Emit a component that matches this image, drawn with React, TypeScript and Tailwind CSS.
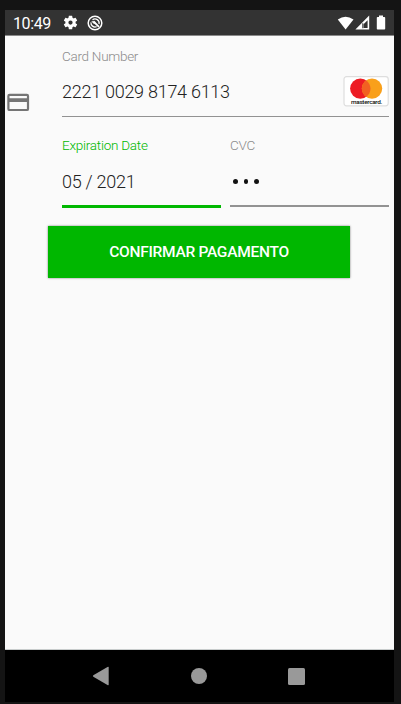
import type { ReactNode } from "react";

function StatusBar() {
  return (
    <header className="flex h-[25px] shrink-0 items-center bg-[#333333] pr-[8px] pl-[8px] text-white">
      <span className="w-[49px] pt-px text-[16px] leading-[25px] tracking-[-0.4px]">10:49</span>
      <svg className="h-[17px] w-[17px]" viewBox="0 0 24 24" fill="currentColor">
        <path d="M19.14 12.94c.04-.3.06-.61.06-.94 0-.32-.02-.64-.07-.94l2.03-1.58a.49.49 0 0 0 .12-.61l-1.92-3.32a.488.488 0 0 0-.59-.22l-2.39.96c-.5-.38-1.03-.7-1.62-.94l-.36-2.54a.484.484 0 0 0-.48-.41h-3.84c-.24 0-.43.17-.47.41l-.36 2.54c-.59.24-1.13.57-1.62.94l-2.39-.96c-.22-.08-.47 0-.59.22L2.74 8.87c-.12.21-.08.47.12.61l2.03 1.58c-.05.3-.09.63-.09.94s.02.64.07.94l-2.03 1.58a.49.49 0 0 0-.12.61l1.92 3.32c.12.22.37.29.59.22l2.39-.96c.5.38 1.03.7 1.62.94l.36 2.54c.05.24.24.41.48.41h3.84c.24 0 .44-.17.47-.41l.36-2.54c.59-.24 1.13-.56 1.62-.94l2.39.96c.22.08.47 0 .59-.22l1.92-3.32c.12-.22.07-.47-.12-.61l-2.01-1.58zM12 15a3 3 0 1 1 0-6 3 3 0 0 1 0 6z" />
      </svg>
      <svg className="ml-[8px] h-4 w-4" viewBox="0 0 16 16" fill="none" stroke="currentColor">
        <circle cx="8" cy="8" r="6.8" strokeWidth="1.5" />
        <path d="M9.6 11.7A4.100 4.100 0 0 1 4 7.300M5.500 4.800A4.100 4.100 0 0 1 12 9" strokeWidth="1.300" />
        <path d="M7 7 12 11.900" strokeWidth="1.800" />
        <path d="M4.600 6.500 7.500 6 8.800 8.400H6.600Z" fill="currentColor" strokeWidth=".3" />
      </svg>
      <svg className="ml-auto h-[14px] w-[17px]" viewBox="0 0 17 14" fill="currentColor">
        <path d="M.8 3.500Q8.500-2 16.500 3.500L8.600 13.500Z" />
      </svg>
      <svg className="ml-[1px] h-[15px] w-[15px]" viewBox="0 0 15 15" fill="currentColor">
        <path fillRule="evenodd" d="M14.200.5V14.500H.4ZM12.600 5.200 8.500 9.300V12.900H12.600Z" />
        <path fill="#333333" d="M7.300 8.300h1v4.900h-1z" />
      </svg>
      <svg className="ml-[6px] h-[15px] w-[10px]" viewBox="0 0 10 15" fill="currentColor">
        <path d="M3 .5h4V2h1.400q.8 0 .8.8v10.900q0 .8-.8.8H1.600q-.8 0-.8-.8V2.800Q.8 2 1.600 2H3Z" />
      </svg>
    </header>
  );
}

function MastercardBadge() {
  return (
    <svg className="h-[31px] w-[46px]" viewBox="0 0 46 31">
      <rect x="1" y=".6" width="44.200" height="29.200" rx="2.500" fill="#fff" stroke="#dedede" strokeWidth="1.200" />
      <circle cx="17.300" cy="12.600" r="10.200" fill="#ed1c24" />
      <circle cx="29" cy="12.600" r="10.200" fill="#f9a01b" />
      <path d="M23.150 4.250a10.200 10.200 0 0 1 0 16.700 10.200 10.200 0 0 1 0-16.700Z" fill="#f26122" />
      <text x="8" y="27.500" textLength="31" lengthAdjust="spacingAndGlyphs" fontSize="5.500" fontWeight="500" fill="#111">
        mastercard.
      </text>
    </svg>
  );
}

interface FieldProps {
  label: string;
  active?: boolean;
  children: ReactNode;
}

function Field({ label, active = false, children }: FieldProps) {
  return (
    <div className="flex min-w-0 flex-1 flex-col">
      <label
        className={
          active
            ? "text-[13.500px] leading-[18px] font-light tracking-[-0.25px] text-[#00b800]"
            : "text-[13.500px] leading-[18px] font-light tracking-[-0.28px] text-[#8c8c8c]"
        }
      >
        {label}
      </label>
      <div className="mt-[10px] flex h-[34px] items-center justify-between text-[18px] font-light tracking-[-0.27px] text-[#222222]">
        {children}
      </div>
      <div className={active ? "mt-[7px] h-[2.500px] bg-[#00b800]" : "mt-[7px] h-[1.500px] bg-[#929292]"} />
    </div>
  );
}

export default function App() {
  return (
    <div className="h-[704px] w-[401px] bg-[#141414] pt-[10px] pl-[5px] font-['Roboto',sans-serif]">
      <div className="flex h-[692px] w-[389px] flex-col">
        <StatusBar />
        <main className="flex-1 border-y border-t-[#8a8a8a] border-b-[#c8cccc] bg-[#fafafa]">
          <div className="flex h-[190px] pr-[5px]">
            <svg className="mt-[57px] ml-[2px] h-[19px] w-[23px] shrink-0" viewBox="0 0 23 19" fill="#757575">
              <path
                fillRule="evenodd"
                d="M2.500.7h17.400q2.200 0 2.200 2.200v13q0 2.200-2.200 2.200H2.500Q.3 18.100.3 15.900v-13Q.3.7 2.500.7ZM2.500 3v2.200h17.400V3ZM2.500 9v6.900h17.400V9Z"
              />
            </svg>
            <div className="ml-[32px] flex-1 pt-[10.500px]">
              <div className="flex h-[89.500px]">
                <Field label="Card Number">
                  <span>2221 0029 8174 6113</span>
                  <MastercardBadge />
                </Field>
              </div>
              <div className="flex gap-[9px]">
                <Field label="Expiration Date" active>
                  <span>05 / 2021</span>
                </Field>
                <Field label="CVC">
                  <span className="flex gap-[6px] pt-px pl-[3px]">
                    <i className="h-[4.500px] w-[4.500px] rounded-full bg-[#111]" />
                    <i className="h-[4.500px] w-[4.500px] rounded-full bg-[#111]" />
                    <i className="h-[4.500px] w-[4.500px] rounded-full bg-[#111]" />
                  </span>
                </Field>
              </div>
            </div>
          </div>
          <button className="ml-[43px] block h-[51.500px] w-[302px] bg-[#00b700] pt-[2px] text-[15.500px] font-medium tracking-[-0.27px] text-white shadow-[0_0_2px_rgba(0,0,0,0.5)]">
            CONFIRMAR PAGAMENTO
          </button>
        </main>
        <nav className="flex h-[52px] shrink-0 items-center bg-black pl-[87px]">
          <svg className="h-[20px] w-[18px]" viewBox="0 0 18 20" fill="#999999">
            <path d="M15.500.9q1.200-.6 1.200.6v17q0 1.200-1.200.6L1.300 10.700q-.8-.7 0-1.400Z" />
          </svg>
          <div className="ml-[81px] h-4 w-4 rounded-full bg-[#999999]" />
          <div className="ml-[81px] h-[17px] w-[17px] rounded-[1.500px] bg-[#999999]" />
        </nav>
      </div>
    </div>
  );
}
